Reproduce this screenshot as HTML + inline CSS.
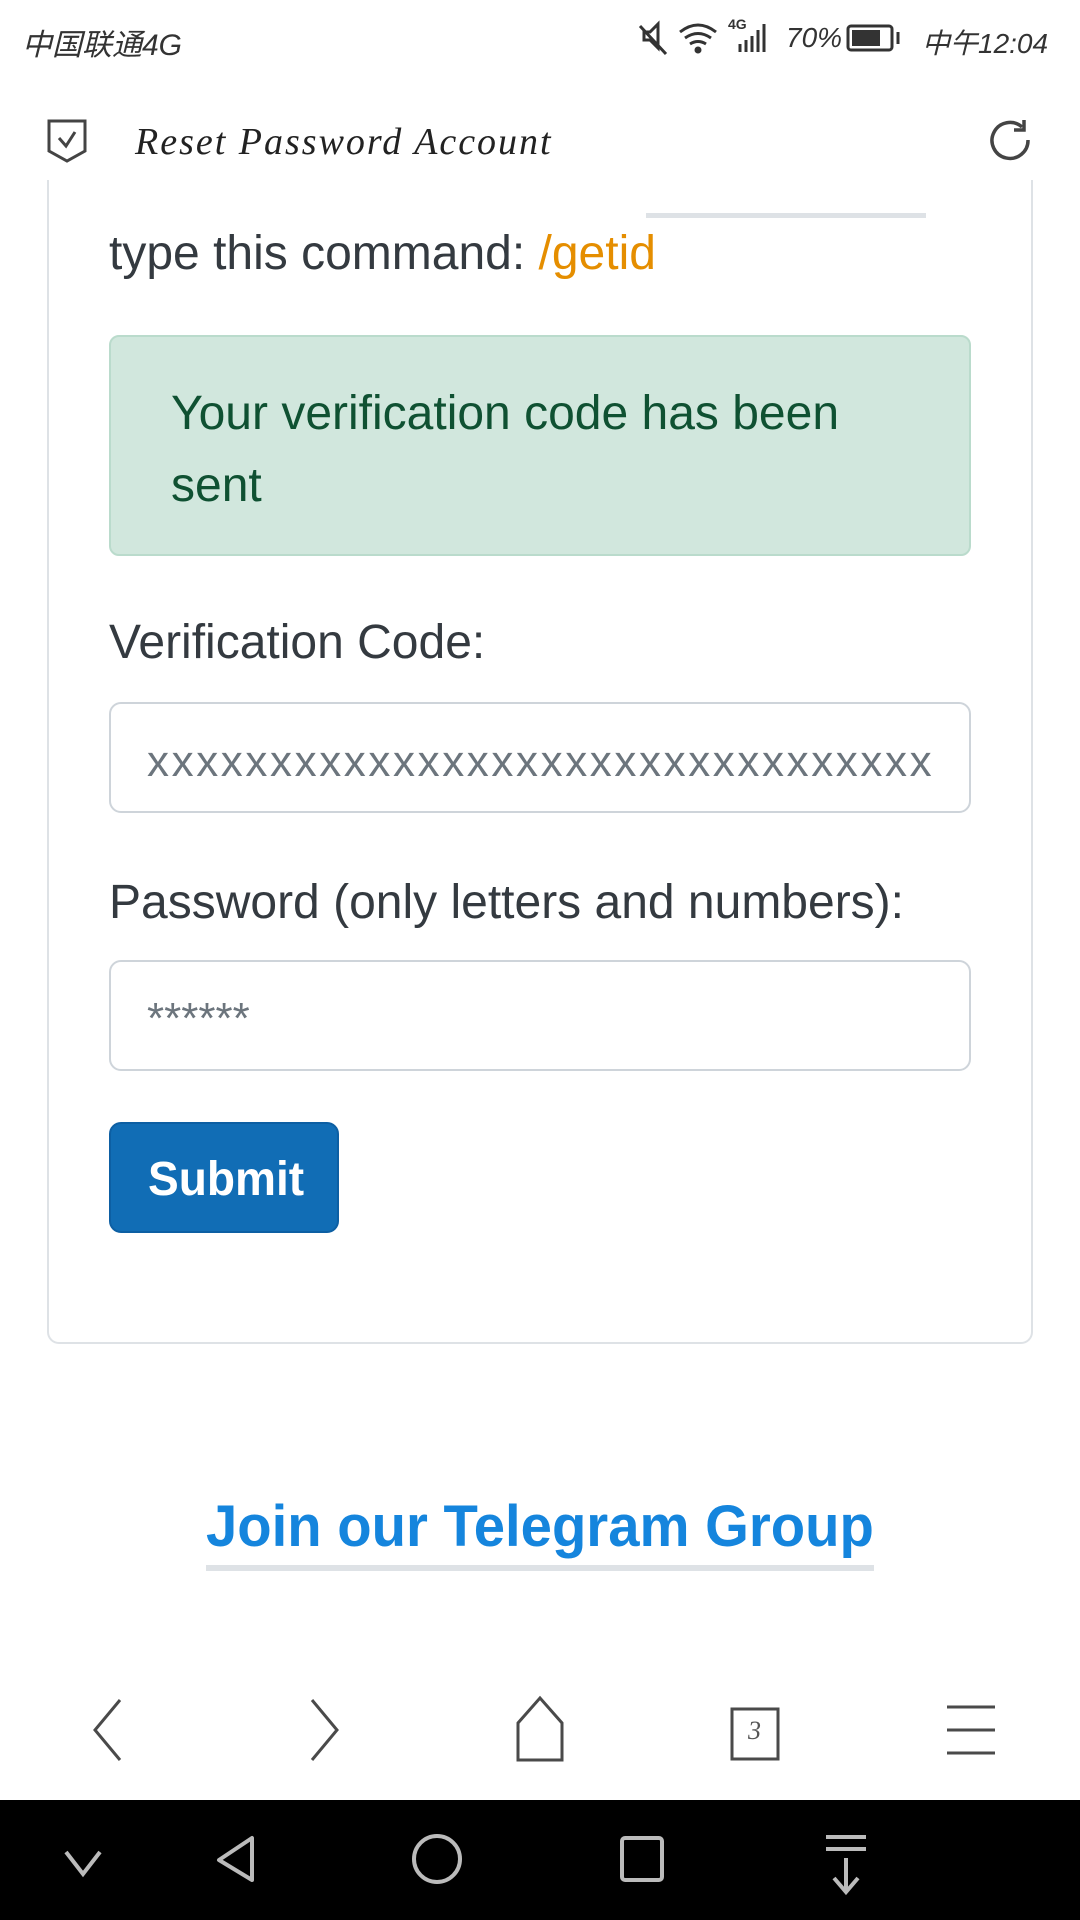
<!DOCTYPE html>
<html><head><meta charset="utf-8"><style>
*{margin:0;padding:0;box-sizing:border-box}
body{width:1080px;height:1920px;position:relative;overflow:hidden;background:#fff;font-family:"Liberation Sans","Noto Sans CJK SC",sans-serif;color:#212529}
.a{position:absolute;white-space:nowrap}
.sx{transform-origin:left center}
</style></head><body>
<div class="a" style="left:22px;top:20px;font-size:30px;color:#333;font-style:italic">中国联通4G</div>
<div class="a" style="left:636px;top:18px;height:40px;width:430px">
<svg width="430" height="40" viewBox="0 0 430 40" style="position:absolute;left:0;top:0" fill="none" stroke="#333" stroke-width="3">
<path d="M4 8 L30 36 M8 14 h6 l8-8 v24 l-8-8 h-6z"/>
<path d="M44 14 q18-14 36 0 M49 20 q13-9 26 0 M54 26 q8-5 16 0"/><circle cx="62" cy="32" r="2" fill="#333"/>
<path d="M104 34v-8 M110 34v-12 M116 34v-16 M122 34v-22 M128 34v-28"/>
<rect x="212" y="8" width="44" height="24" rx="3"/><rect x="216" y="12" width="28" height="16" fill="#333" stroke="none"/><path d="M262 14v12"/>
</svg>
<div class="a" style="left:92px;top:-2px;font-size:14px;font-weight:bold;color:#333">4G</div>
<div class="a" style="left:150px;top:4px;font-size:28px;font-style:italic;color:#333">70%</div>
<div class="a" style="left:286px;top:4px;font-size:28px;font-style:italic;color:#333">中午12:04</div>
</div>
<svg class="a" style="left:46px;top:118px" width="42" height="46" viewBox="0 0 42 46" fill="none" stroke="#444" stroke-width="3"><path d="M3 3h36v30l-18 10-18-10z"/><path d="M13 20l7 8 9-14"/></svg>
<div class="a" style="left:135px;top:120px;font-size:38px;font-style:italic;letter-spacing:2px;font-family:'Liberation Serif',serif;color:#222">Reset Password Account</div>
<svg class="a" style="left:988px;top:118px" width="48" height="48" viewBox="0 0 48 48" fill="none" stroke="#444" stroke-width="3.5"><path d="M40 22a18 18 0 1 1-6-13"/><path d="M36 2v10h-10"/></svg>

<div class="a" style="left:47px;top:180px;width:986px;height:1164px;border:2px solid #dee2e6;border-top:none;border-radius:0 0 12px 12px"></div>
<div class="a" style="left:646px;top:213px;width:280px;height:5px;background:#dee2e6"></div>
<div class="a" style="left:109px;top:226px;font-size:48px;color:#343a40">type this command: <span style="color:#e58e00">/getid</span></div>
<div class="a" style="left:109px;top:335px;width:862px;height:221px;background:#d1e7dd;border:2px solid #badbcc;border-radius:10px"></div>
<div class="a" style="left:171px;top:386px;font-size:48px;color:#0f5132">Your verification code has been</div>
<div class="a" style="left:171px;top:458px;font-size:48px;color:#0f5132">sent</div>
<div class="a" style="left:109px;top:615px;font-size:48px;color:#343a40">Verification Code:</div>
<div class="a" style="left:109px;top:702px;width:862px;height:111px;border:2px solid #ced4da;border-radius:12px"></div>
<div class="a" style="left:147px;top:737px;font-size:44px;color:#6c757d;letter-spacing:2.6px">xxxxxxxxxxxxxxxxxxxxxxxxxxxxxxxx</div>
<div class="a" style="left:109px;top:875px;font-size:48px;color:#343a40">Password (only letters and numbers):</div>
<div class="a" style="left:109px;top:960px;width:862px;height:111px;border:2px solid #ced4da;border-radius:12px"></div>
<div class="a" style="left:147px;top:994px;font-size:44px;color:#6c757d">******</div>
<div class="a" style="left:109px;top:1122px;width:230px;height:111px;background:#116db5;border:2px solid #0d5fa3;border-radius:12px"></div>
<div class="a sx" style="left:148px;top:1152px;font-size:48px;font-weight:bold;color:#fff;transform:scaleX(.96)">Submit</div>

<div class="a sx" style="left:206px;top:1493px;font-size:58px;font-weight:bold;color:#1585dd;transform:scaleX(.97)">Join our Telegram Group</div>
<div class="a" style="left:206px;top:1565px;width:668px;height:6px;background:#dee2e6"></div>

<svg class="a" style="left:0;top:1690px" width="1080" height="80" viewBox="0 0 1080 80" fill="none" stroke="#4a4a4a" stroke-width="3">
<path d="M120 10 L95 40 L120 70"/><path d="M312 10 L337 40 L312 70"/>
<path d="M518 70V33L540 8l22 25v37z"/>
<rect x="732" y="19" width="46" height="50"/>
<path d="M947 17h48M947 40h48M947 63h48"/>
</svg>
<div class="a" style="left:748px;top:1716px;font-size:26px;font-style:italic;font-family:'Liberation Serif',serif;color:#555">3</div>
<div class="a" style="left:0;top:1800px;width:1080px;height:120px;background:#000"></div>
<svg class="a" style="left:0;top:1800px" width="1080" height="120" viewBox="0 0 1080 120" fill="none" stroke="#bbb" stroke-width="4">
<path d="M66 52l17 22 17-22"/>
<path d="M252 38v42l-33-20z" stroke-linejoin="round"/>
<ellipse cx="437" cy="59" rx="23" ry="23"/>
<rect x="622" y="38" width="40" height="42" rx="3"/>
<path d="M826 37h40M826 49h40M846 58v34M834 78l12 14 12-14"/>
</svg>
</body></html>
